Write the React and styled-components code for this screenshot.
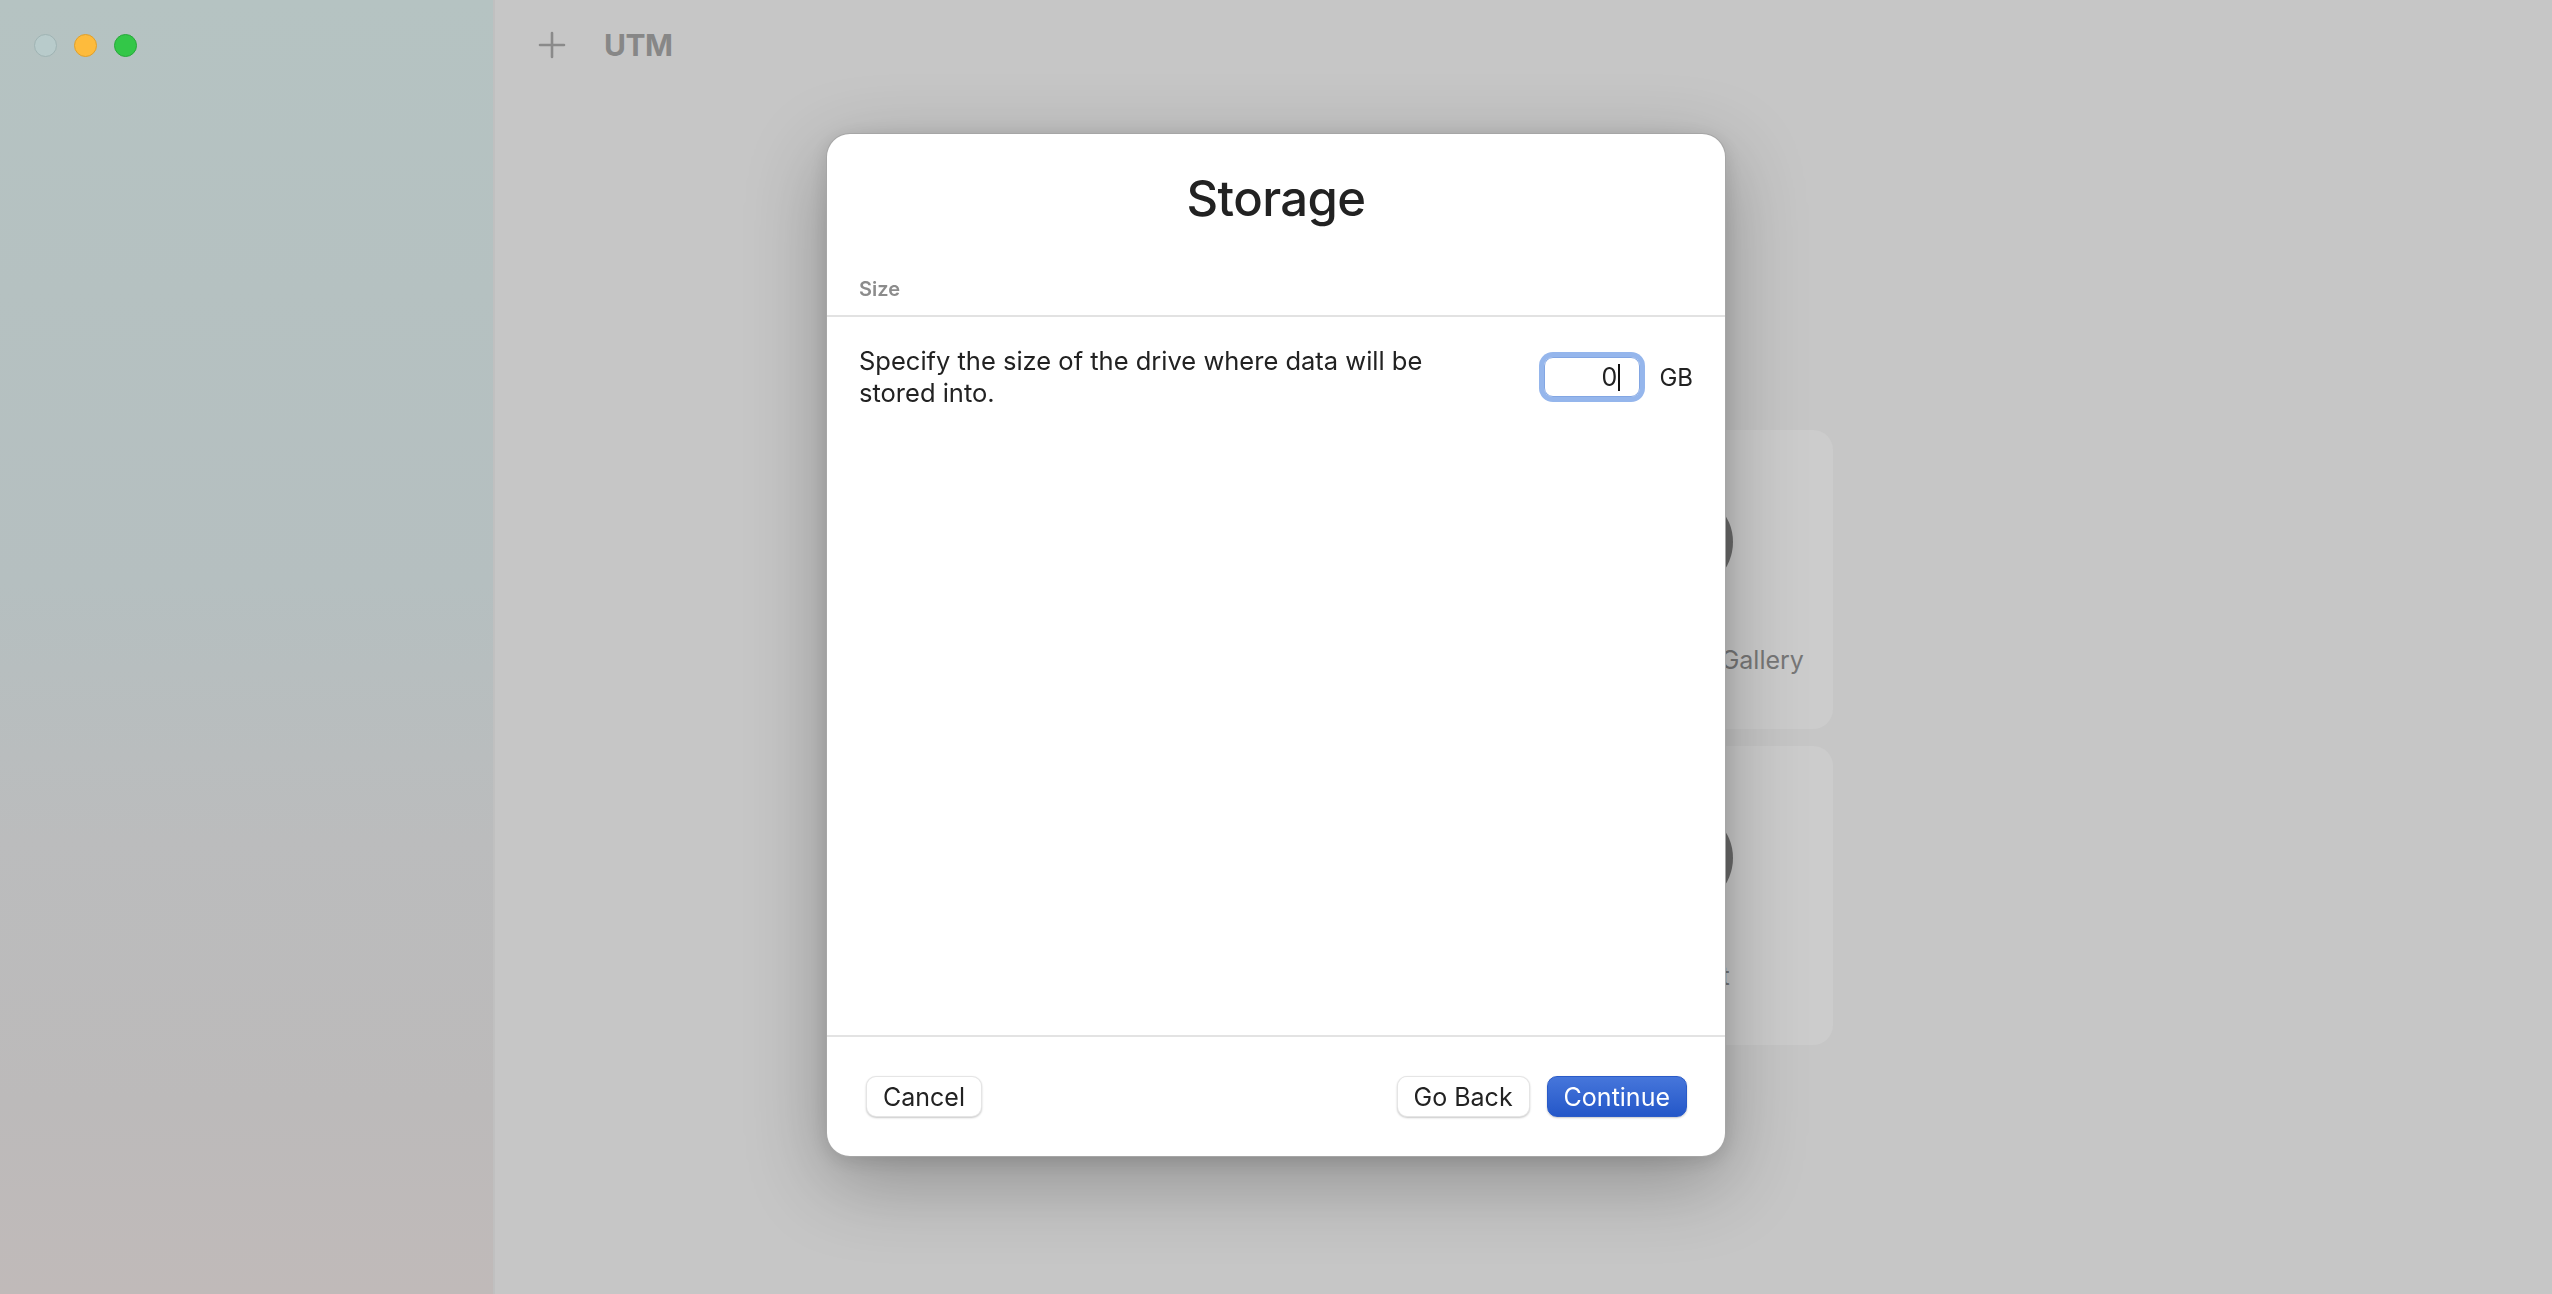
import React from 'react';
import styled, { createGlobalStyle } from 'styled-components';

const GlobalStyle = createGlobalStyle`
  html, body, #root {
    margin: 0;
    height: 100%;
  }
  body {
    font-family: Inter, "Liberation Sans", sans-serif;
    overflow: hidden;
    -webkit-font-smoothing: antialiased;
  }
  * { box-sizing: border-box; }
`;

function PlusIcon() {
  return (
    <svg width="28" height="28" viewBox="0 0 28 28" fill="none">
      <path d="M14 2v24M2 14h24" stroke="#8a8a8a" strokeWidth="2.6" strokeLinecap="round" />
    </svg>
  );
}

const cards = [
  'Create a New Virtual Machine',
  'Browse UTM Gallery',
  'User Guide',
  'Support',
];

function App() {
  return (
    <>
      <GlobalStyle />
      <Window>
        <Sidebar>
          <Lights>
            <Light color="#b8cbcb" edge="#9fb3b3" />
            <Light color="#febb3c" edge="#e0a02a" />
            <Light color="#33c748" edge="#27a83a" />
          </Lights>
        </Sidebar>
        <Main>
          <Toolbar>
            <PlusIcon />
            <AppTitle>UTM</AppTitle>
          </Toolbar>
          <Content>
            <Welcome>Welcome to UTM</Welcome>
            <CardGrid>
              {cards.map((c) => (
                <Card key={c}>
                  <CardIcon />
                  <CardLabel>{c}</CardLabel>
                </Card>
              ))}
            </CardGrid>
          </Content>
        </Main>
      </Window>

      <Overlay>
        <Sheet>
          <SheetTitle>Storage</SheetTitle>
          <SectionHead>Size</SectionHead>
          <SheetBody>
            <FieldRow>
              <Description>
                Specify the size of the drive where data will be stored into.
              </Description>
              <FieldGroup>
                <Field>
                  <FieldValue>0</FieldValue>
                  <Caret />
                </Field>
                <Unit>GB</Unit>
              </FieldGroup>
            </FieldRow>
          </SheetBody>
          <Footer>
            <Button>Cancel</Button>
            <FooterRight>
              <Button>Go Back</Button>
              <Button primary>Continue</Button>
            </FooterRight>
          </Footer>
        </Sheet>
      </Overlay>
    </>
  );
}

const Window = styled.div`
  display: flex;
  height: 100vh;
  width: 100vw;
`;

const Sidebar = styled.div`
  width: 495px;
  flex-shrink: 0;
  background: linear-gradient(180deg, #b5c3c2 0%, #b5bfc0 45%, #bbbcbd 65%, #bcbaba 85%, #c0bab9 100%);
  border-right: 2px solid #c0c0c0;
`;

const Lights = styled.div`
  display: flex;
  gap: 17px;
  padding: 34px 0 0 34px;
`;

const Light = styled.div`
  width: 23px;
  height: 23px;
  border-radius: 50%;
  background: ${(p) => p.color};
  border: 1px solid ${(p) => p.edge};
`;

const Main = styled.div`
  flex: 1;
  background: #c6c6c6;
  display: flex;
  flex-direction: column;
`;

const Toolbar = styled.div`
  height: 90px;
  display: flex;
  align-items: center;
  gap: 38px;
  padding-left: 43px;
`;

const AppTitle = styled.div`
  font-size: 30px;
  font-weight: 700;
  color: #878787;
  letter-spacing: -0.5px;
`;

const Content = styled.div`
  flex: 1;
  display: flex;
  flex-direction: column;
  align-items: center;
  padding-top: 150px;
`;

const Welcome = styled.h1`
  margin: 0 0 120px;
  height: 70px;
  font-size: 40px;
  font-weight: 600;
  color: #555;
`;

const CardGrid = styled.div`
  display: grid;
  grid-template-columns: 301px 301px;
  grid-auto-rows: 299px;
  gap: 17px;
`;

const Card = styled.div`
  background: #cccccc;
  border-radius: 20px;
  display: flex;
  flex-direction: column;
  align-items: center;
  padding-top: 62px;
`;

const CardIcon = styled.div`
  width: 100px;
  height: 100px;
  border-radius: 50%;
  background: #6c6c6c;
`;

const CardLabel = styled.div`
  margin-top: 53px;
  font-size: 25px;
  color: #777;
  white-space: nowrap;
`;

const Overlay = styled.div`
  position: fixed;
  inset: 0;
  display: flex;
  justify-content: center;
  align-items: flex-start;
  padding-top: 133px;
`;

const Sheet = styled.div`
  width: 900px;
  height: 1024px;
  background: #ffffff;
  border-radius: 24px;
  border: 1px solid rgba(0, 0, 0, 0.35);
  box-shadow: 0 24px 80px rgba(0, 0, 0, 0.28), 0 4px 20px rgba(0, 0, 0, 0.12);
  display: flex;
  flex-direction: column;
  overflow: hidden;
`;

const SheetTitle = styled.div`
  padding-top: 35px;
  text-align: center;
  font-size: 49px;
  line-height: 59px;
  font-weight: 500;
  color: #222;
  letter-spacing: -0.6px;
`;

const SectionHead = styled.div`
  margin-top: 49px;
  padding: 0 32px 14px;
  font-size: 20px;
  line-height: 24px;
  font-weight: 600;
  color: #8c8c8c;
  border-bottom: 2px solid #e2e2e2;
`;

const SheetBody = styled.div`
  flex: 1;
  padding: 28px 32px 0;
`;

const FieldRow = styled.div`
  display: flex;
  align-items: center;
  justify-content: space-between;
`;

const Description = styled.div`
  width: 620px;
  font-size: 25.5px;
  line-height: 32px;
  color: #222;
`;

const FieldGroup = styled.div`
  display: flex;
  align-items: center;
  gap: 19px;
`;

const Field = styled.div`
  width: 96px;
  height: 40px;
  border-radius: 9px;
  border: 1.5px solid #82a6e3;
  box-shadow: 0 0 0 5px #95b6ec;
  display: flex;
  align-items: center;
  justify-content: flex-end;
  padding-right: 19px;
  gap: 1px;
`;

const FieldValue = styled.span`
  font-size: 25px;
  color: #222;
`;

const Caret = styled.span`
  width: 2px;
  height: 27px;
  background: #111;
`;

const Unit = styled.span`
  font-size: 24px;
  color: #222;
`;

const Footer = styled.div`
  height: 121px;
  border-top: 2px solid #e3e3e3;
  display: flex;
  align-items: center;
  justify-content: space-between;
  padding: 0 38px 0 39px;
`;

const FooterRight = styled.div`
  display: flex;
  gap: 17px;
`;

const Button = styled.button`
  height: 41px;
  padding: 0 16px;
  border-radius: 10px;
  font-family: inherit;
  font-size: 25px;
  color: ${(p) => (p.primary ? '#ffffff' : '#222')};
  background: ${(p) => (p.primary ? 'linear-gradient(180deg, #4676db 0%, #2457c8 100%)' : '#ffffff')};
  border: 1px solid ${(p) => (p.primary ? '#2a5bc8' : 'rgba(0, 0, 0, 0.1)')};
  box-shadow: 0 1px 2px rgba(0, 0, 0, 0.22);
  cursor: pointer;
`;

export default App;
